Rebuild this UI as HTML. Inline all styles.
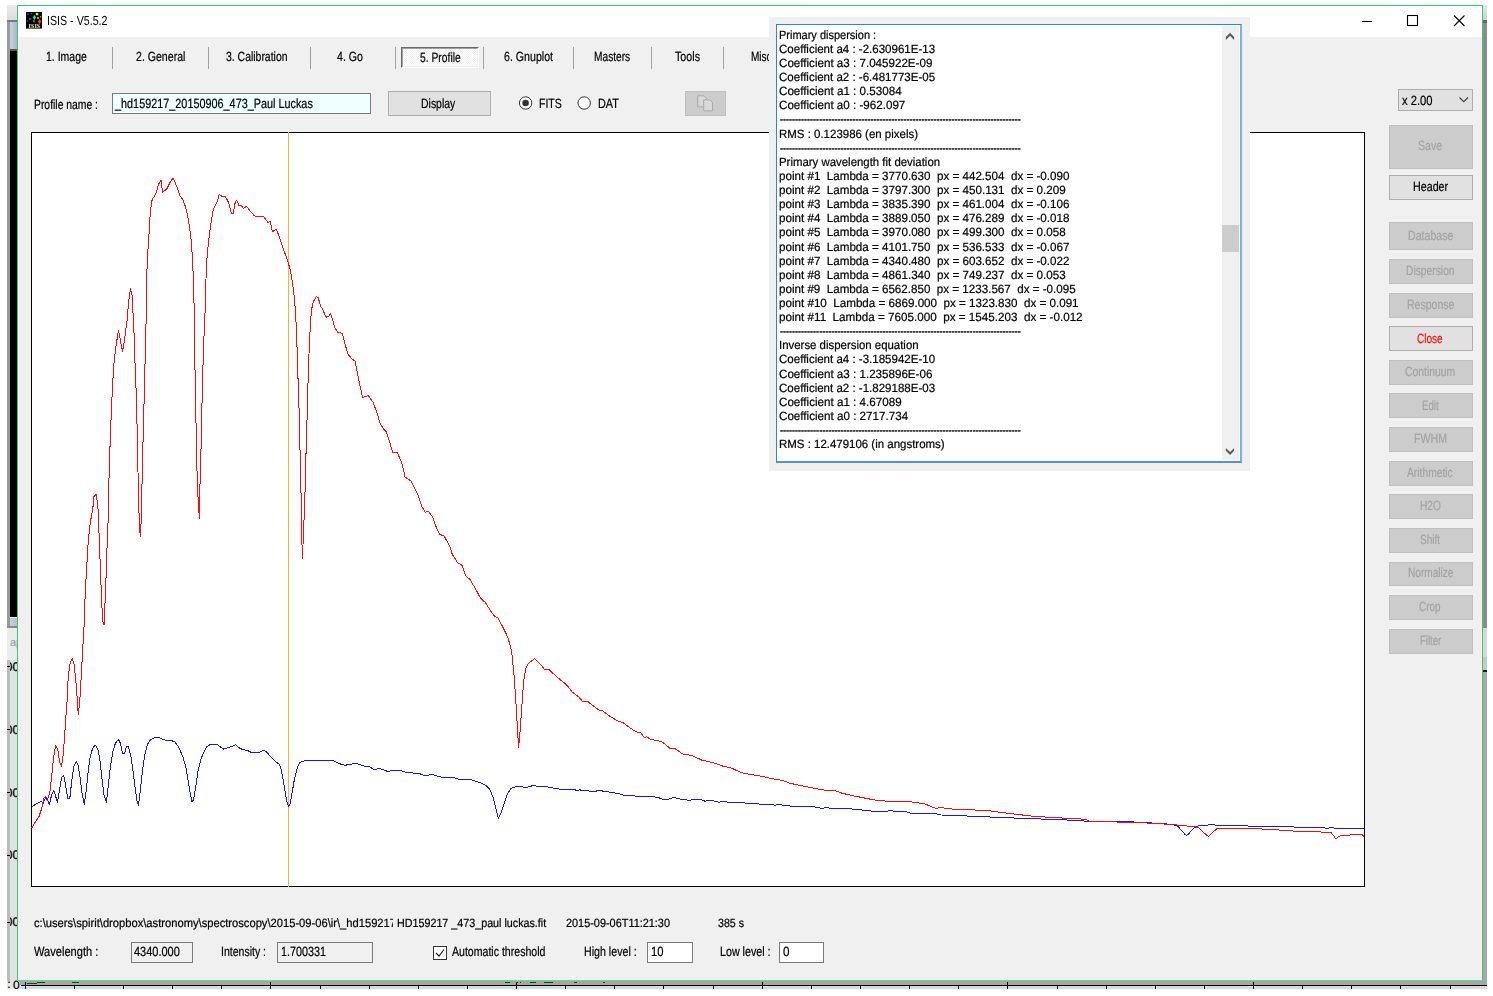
<!DOCTYPE html>
<html><head><meta charset="utf-8"><title>ISIS - V5.5.2</title>
<style>
html,body{margin:0;padding:0;background:#fff;}
body{width:1493px;height:996px;position:relative;overflow:hidden;font-family:"Liberation Sans",sans-serif;}
.a{position:absolute;}
.t{position:absolute;white-space:pre;transform-origin:0 0;text-rendering:geometricPrecision;-webkit-text-stroke:0.22px;}
.sep{position:absolute;width:1px;top:47px;height:22px;background:#a0a0a0;}
.btn{position:absolute;box-sizing:border-box;border:1px solid #adadad;background:#e1e1e1;}
.dis{position:absolute;box-sizing:border-box;border:1px solid #bfbfbf;background:#cccccc;}
.inp{position:absolute;box-sizing:border-box;border:1px solid #7a7a7a;background:#fff;}
</style></head><body>

<div class="a" style="left:7px;top:5px;width:10px;height:15px;background:linear-gradient(#ececec,#dcdcdc);"></div>
<div class="a" style="left:7px;top:20px;width:10px;height:2px;background:#7a7a7a;"></div>
<div class="a" style="left:7px;top:22px;width:3px;height:604px;background:#9a9a9a;"></div>
<div class="a" style="left:10px;top:22px;width:7px;height:28px;background:linear-gradient(90deg,#c4d2e2,#aab6c8);"></div>
<div class="a" style="left:10px;top:49px;width:7px;height:2px;background:#555;"></div>
<div class="a" style="left:10px;top:51px;width:7px;height:566px;background:#000;"></div>
<div class="a" style="left:10px;top:617px;width:7px;height:1px;background:#f4f4f4;"></div>
<div class="a" style="left:10px;top:618px;width:7px;height:8px;background:linear-gradient(90deg,#c4d0e0,#b4c0d2);"></div>
<div class="a" style="left:7px;top:626px;width:10px;height:2px;background:#8a8a8a;"></div>
<div class="a" style="left:7px;top:628px;width:10px;height:32px;background:#ececec;"></div>
<div class="a" style="left:7px;top:660px;width:3px;height:329px;background:#bcbcbc;"></div>
<div class="a" style="left:10px;top:660px;width:7px;height:321px;background:#e2e2e2;"></div>
<div class="a" style="left:7px;top:981px;width:14px;height:8px;background:#e6e6e6;"></div>
<div class="a" style="left:20px;top:981px;width:1467px;height:4px;background:#aaa6a6;"></div>
<div class="a" style="left:20px;top:986px;width:1467px;height:3px;background:#dadada;"></div>
<div class="a" style="left:21px;top:985px;width:1466px;height:1px;background:#000;"></div>
<div class="a" style="left:1483px;top:5px;width:4px;height:15px;background:linear-gradient(#e4e4e4,#d0d0d0);"></div>
<div class="a" style="left:1483px;top:20px;width:4px;height:3px;background:#666;"></div>
<div class="a" style="left:1483px;top:23px;width:4px;height:605px;background:#8c8c8c;"></div>
<div class="a" style="left:1483px;top:628px;width:4px;height:29px;background:#d8d8d8;"></div>
<div class="a" style="left:1483px;top:657px;width:4px;height:13px;background:#c8c8c8;"></div>
<div class="a" style="left:1483px;top:670px;width:4px;height:2px;background:#111;"></div>
<div class="a" style="left:1483px;top:672px;width:4px;height:313px;background:#a8a8a8;"></div>
<div class="a" style="left:25px;top:982px;width:1.4px;height:7px;background:#000;"></div>
<div class="a" style="left:74px;top:985px;width:1.2px;height:3.5px;background:#111;"></div>
<div class="a" style="left:123px;top:985px;width:1.2px;height:3.5px;background:#111;"></div>
<div class="a" style="left:172px;top:985px;width:1.2px;height:3.5px;background:#111;"></div>
<div class="a" style="left:221px;top:985px;width:1.2px;height:3.5px;background:#111;"></div>
<div class="a" style="left:270px;top:982px;width:1.4px;height:7px;background:#000;"></div>
<div class="a" style="left:320px;top:985px;width:1.2px;height:3.5px;background:#111;"></div>
<div class="a" style="left:369px;top:985px;width:1.2px;height:3.5px;background:#111;"></div>
<div class="a" style="left:418px;top:985px;width:1.2px;height:3.5px;background:#111;"></div>
<div class="a" style="left:467px;top:985px;width:1.2px;height:3.5px;background:#111;"></div>
<div class="a" style="left:516px;top:982px;width:1.4px;height:7px;background:#000;"></div>
<div class="a" style="left:565px;top:985px;width:1.2px;height:3.5px;background:#111;"></div>
<div class="a" style="left:614px;top:985px;width:1.2px;height:3.5px;background:#111;"></div>
<div class="a" style="left:663px;top:985px;width:1.2px;height:3.5px;background:#111;"></div>
<div class="a" style="left:713px;top:985px;width:1.2px;height:3.5px;background:#111;"></div>
<div class="a" style="left:762px;top:982px;width:1.4px;height:7px;background:#000;"></div>
<div class="a" style="left:811px;top:985px;width:1.2px;height:3.5px;background:#111;"></div>
<div class="a" style="left:860px;top:985px;width:1.2px;height:3.5px;background:#111;"></div>
<div class="a" style="left:909px;top:985px;width:1.2px;height:3.5px;background:#111;"></div>
<div class="a" style="left:958px;top:985px;width:1.2px;height:3.5px;background:#111;"></div>
<div class="a" style="left:1007px;top:982px;width:1.4px;height:7px;background:#000;"></div>
<div class="a" style="left:1057px;top:985px;width:1.2px;height:3.5px;background:#111;"></div>
<div class="a" style="left:1106px;top:985px;width:1.2px;height:3.5px;background:#111;"></div>
<div class="a" style="left:1155px;top:985px;width:1.2px;height:3.5px;background:#111;"></div>
<div class="a" style="left:1204px;top:985px;width:1.2px;height:3.5px;background:#111;"></div>
<div class="a" style="left:1253px;top:982px;width:1.4px;height:7px;background:#000;"></div>
<div class="a" style="left:1302px;top:985px;width:1.2px;height:3.5px;background:#111;"></div>
<div class="a" style="left:1351px;top:985px;width:1.2px;height:3.5px;background:#111;"></div>
<div class="a" style="left:1400px;top:985px;width:1.2px;height:3.5px;background:#111;"></div>
<div class="a" style="left:1450px;top:985px;width:1.2px;height:3.5px;background:#111;"></div>
<div class="a" style="left:27px;top:983px;width:10px;height:1px;background:#333;"></div>
<div class="a" style="left:37px;top:981.5px;width:8px;height:1.5px;background:#0c4a2c;"></div>
<div class="a" style="left:71.5px;top:981.5px;width:7.5px;height:1.5px;background:#0c4a2c;"></div>
<div class="a" style="left:505px;top:981.5px;width:5px;height:1.5px;background:#0c4a2c;"></div>
<div class="a" style="left:516px;top:981.5px;width:1.5px;height:1.5px;background:#0c4a2c;"></div>
<div class="a" style="left:519.5px;top:981.5px;width:1.5px;height:1.5px;background:#0c4a2c;"></div>
<div class="a" style="left:530px;top:981.5px;width:6px;height:1.5px;background:#0c4a2c;"></div>
<div class="a" style="left:543.5px;top:981.5px;width:9.5px;height:1.5px;background:#0c4a2c;"></div>
<div class="a" style="left:573.5px;top:981.5px;width:3.5px;height:1.5px;background:#0c4a2c;"></div>
<div class="a" style="left:603px;top:981.5px;width:2px;height:1.5px;background:#0c4a2c;"></div>
<div class="a" style="left:7.2px;top:666px;width:2.4px;height:1.2px;background:#000;"></div>
<div class="a" style="left:9.6px;top:659.5px;width:7.4px;height:14px;overflow:hidden;"><span class="t" style="left:-4.1px;top:0;font-size:12.5px;line-height:14px;color:#000;">00</span></div>
<div class="a" style="left:7.2px;top:729px;width:2.4px;height:1.2px;background:#000;"></div>
<div class="a" style="left:9.6px;top:722.5px;width:7.4px;height:14px;overflow:hidden;"><span class="t" style="left:-4.1px;top:0;font-size:12.5px;line-height:14px;color:#000;">00</span></div>
<div class="a" style="left:7.2px;top:792px;width:2.4px;height:1.2px;background:#000;"></div>
<div class="a" style="left:9.6px;top:785.5px;width:7.4px;height:14px;overflow:hidden;"><span class="t" style="left:-4.1px;top:0;font-size:12.5px;line-height:14px;color:#000;">00</span></div>
<div class="a" style="left:7.2px;top:854.5px;width:2.4px;height:1.2px;background:#000;"></div>
<div class="a" style="left:9.6px;top:848px;width:7.4px;height:14px;overflow:hidden;"><span class="t" style="left:-4.1px;top:0;font-size:12.5px;line-height:14px;color:#000;">00</span></div>
<div class="a" style="left:7.2px;top:921.8px;width:2.4px;height:1.2px;background:#000;"></div>
<div class="a" style="left:9.6px;top:915.3px;width:7.4px;height:14px;overflow:hidden;"><span class="t" style="left:-4.1px;top:0;font-size:12.5px;line-height:14px;color:#000;">00</span></div>
<div class="a" style="left:10px;top:636px;width:7px;height:16px;overflow:hidden;"><span class="t" style="left:0px;top:0;font-size:11px;line-height:14px;color:#a0a0a8;">ap</span></div>
<span class="t" style="left:7.3px;top:978.3px;font-size:12px;line-height:12px;color:#000;">:</span>
<span class="t" style="left:13px;top:978.6px;font-size:12px;line-height:12px;color:#000;">0</span>
<div class="a" style="left:0px;top:989px;width:1493px;height:7px;background:#fff;"></div>
<div class="a" id="win" style="left:17px;top:5px;width:1466px;height:976px;box-sizing:border-box;border:1px solid #2ccb74;background:#f0f0f0;"></div>
<div class="a" style="left:18px;top:6px;width:1464px;height:31px;background:#fff;"></div>
<div class="a" style="left:18px;top:37px;width:1px;height:943px;background:#fbeff1;"></div><div class="a" style="left:1481px;top:37px;width:1px;height:943px;background:#fbeff1;"></div>
<div class="a" style="left:17px;top:980px;width:1466px;height:1px;background:#6fd4a0;"></div><div class="a" style="left:18px;top:981px;width:1465px;height:1px;background:#7cba98;"></div>
<svg class="a" style="left:26px;top:12px;will-change:transform" width="16" height="17" viewBox="0 0 16 17">
<rect width="16" height="16.6" fill="#000"/>
<rect x="1" y="1.7" width="2.2" height="1.5" fill="#0a35e0"/>
<rect x="4.3" y="1.1" width="2" height="1.1" fill="#1468d0"/>
<rect x="9.8" y="0.9" width="2.5" height="2.4" fill="#b8f940"/>
<polygon points="8.4,3.1 10.1,5.4 8.4,7.9 6.8,5.4" fill="#22f566"/>
<rect x="13.8" y="3.9" width="1.5" height="1.5" fill="#a8a822"/>
<rect x="11" y="5" width="2.1" height="2" fill="#dc8a34"/>
<rect x="3" y="6" width="2.2" height="2" fill="#1458bc"/>
<rect x="1.1" y="8.2" width="1.1" height="2" fill="#8a12aa"/>
<rect x="7" y="8.2" width="1.7" height="2" fill="#10a8b8"/>
<polygon points="13.6,7 15.3,9.6 13.6,12.2 11.8,9.6" fill="#fb4030"/>
<text x="2.6" y="16" font-family="Liberation Serif,serif" font-weight="bold" font-size="5.8" fill="#f4f4a0" textLength="11.6" lengthAdjust="spacingAndGlyphs">ISIS</text>
</svg>

<svg class="a" style="left:1350px;top:6px" width="130" height="31" viewBox="0 0 130 31">
<path d="M12 15.5H22" stroke="#000" stroke-width="1.1" fill="none"/>
<rect x="57.5" y="9.5" width="10" height="10" stroke="#000" stroke-width="1.1" fill="none"/>
<path d="M104 9.5L114.5 20M114.5 9.5L104 20" stroke="#000" stroke-width="1.1" fill="none"/>
</svg>
<div class="sep" style="left:112px"></div>
<div class="sep" style="left:208px"></div>
<div class="sep" style="left:310px"></div>
<div class="sep" style="left:395px"></div>
<div class="sep" style="left:483px"></div>
<div class="sep" style="left:573px"></div>
<div class="sep" style="left:651px"></div>
<div class="sep" style="left:723px"></div>
<div class="a" style="left:401px;top:47px;width:78px;height:21px;box-sizing:border-box;border:1px solid #fff;border-top-color:#696969;border-left-color:#696969;background:#f7f7f7 conic-gradient(#fff 25%,#f0f0f0 0 50%,#fff 0 75%,#f0f0f0 0) 0 0/2px 2px;"><div style="width:100%;height:100%;box-sizing:border-box;border:1px solid #e3e3e3;border-top-color:#a0a0a0;border-left-color:#a0a0a0;border-right-color:#f0f0f0;border-bottom-color:#f0f0f0"></div></div>
<div class="inp" style="left:112px;top:93px;width:259px;height:21px;background:#f0ffff;"></div>
<div class="btn" style="left:388px;top:91px;width:103px;height:25px;"></div>
<svg class="a" style="left:517px;top:94px" width="90" height="18" viewBox="0 0 90 18">
<circle cx="8.6" cy="9" r="6.2" fill="#fff" stroke="#333" stroke-width="1"/><circle cx="8.6" cy="9" r="3.3" fill="#333"/>
<circle cx="67.2" cy="9" r="6.2" fill="#fff" stroke="#333" stroke-width="1"/>
</svg>
<div class="dis" style="left:685px;top:91px;width:41px;height:25px;"></div>
<svg class="a" style="left:685px;top:91px" width="41" height="25" viewBox="0 0 41 25">
<path d="M12.7 4.8h6.3l2.5 2.6v8.4h-8.8z" fill="#d9d9d9" stroke="#a9a9a9" stroke-width="1" stroke-linejoin="round"/>
<path d="M18.7 8.9h6.3l2.5 2.6v8.4h-8.8z" fill="#d9d9d9" stroke="#a9a9a9" stroke-width="1" stroke-linejoin="round"/>
</svg>
<div class="a" style="left:31px;top:132px;width:1334px;height:755px;box-sizing:border-box;border:1px solid #000;background:#fff;"></div>
<svg class="a" style="left:0;top:0" width="1493" height="996" viewBox="0 0 1493 996">
<rect x="288" y="132" width="1" height="755" fill="#fbae32"/>
<polyline shape-rendering="crispEdges" fill="none" stroke="#1414f4" stroke-width="1" stroke-linejoin="round" points="31.6,807.5 35.0,804.5 39.0,802.5 41.7,801.5 43.1,803.5 45.7,797.5 47.7,800.5 49.5,804.5 51.7,794.4 53.7,790.4 55.7,796.5 57.5,802.5 59.7,788.4 61.7,777.4 63.8,775.4 65.8,786.4 67.8,798.5 69.8,798.5 71.8,780.4 73.8,766.3 76.2,761.3 78.2,765.3 80.2,778.4 82.2,794.4 84.3,804.5 86.3,790.4 88.3,770.3 90.3,756.3 92.7,748.2 95.3,745.2 97.9,749.2 99.9,760.3 101.9,778.4 103.9,794.4 106.4,802.5 108.4,784.4 110.4,766.3 112.8,752.2 115.4,743.2 118.4,739.2 120.4,743.2 122.4,753.2 124.4,753.9 126.5,746.6 128.5,746.6 130.9,756.3 132.9,770.3 134.9,786.4 136.9,800.5 138.5,805.5 140.5,788.4 142.5,770.3 144.9,754.3 147.5,744.2 150.6,739.8 154.6,737.8 158.6,737.2 162.6,739.2 166.6,740.6 171.7,740.6 175.1,742.2 178.7,747.2 182.7,756.3 185.7,766.3 188.1,780.4 190.1,792.4 191.8,801.5 193.4,800.5 195.2,790.4 197.8,772.3 200.8,759.3 203.8,752.2 206.8,746.6 210.8,744.2 216.9,744.2 220.9,747.2 223.9,749.2 227.9,747.6 231.9,746.6 235.4,744.6 239.0,747.8 243.0,749.8 247.0,750.2 251.0,752.2 259.1,752.6 263.1,750.6 266.1,751.2 270.1,756.3 274.1,760.3 279.2,764.3 281.2,769.3 283.2,780.4 285.2,792.4 287.2,803.5 288.8,806.5 290.2,803.5 292.2,792.4 294.2,780.4 296.8,769.3 299.3,763.3 301.7,761.3 309.3,760.3 319.4,760.3 320.0,760.3 334.1,760.9 340.1,763.9 345.1,765.3 350.1,764.3 355.8,763.3 363.2,765.9 369.2,766.7 373.9,769.3 380.3,768.7 387.3,771.3 395.4,770.3 401.4,770.7 407.4,772.7 418.5,773.3 424.5,775.4 432.5,774.7 442.6,777.4 448.6,778.0 453.6,777.4 458.6,779.4 471.7,779.8 475.7,781.4 480.8,782.8 485.8,785.4 489.8,789.4 492.8,796.5 495.8,808.5 498.4,818.2 500.8,813.5 503.9,804.5 507.3,794.4 510.9,788.4 515.9,786.8 520.9,786.4 525.0,787.4 529.0,786.8 533.4,785.4 537.0,786.4 545.1,786.4 553.1,788.0 561.1,789.4 575.2,789.8 577.2,791.0 579.2,789.8 585.2,790.8 595.3,791.4 598.3,790.4 605.3,791.4 613.4,792.8 620.0,794.0 625.7,795.7 628.7,795.1 631.7,795.7 638.7,796.3 650.8,796.3 658.8,797.7 663.9,799.7 667.9,799.3 673.9,797.3 677.9,798.7 689.0,800.3 695.0,799.3 700.0,799.3 705.1,801.2 711.1,800.1 719.1,802.4 723.1,801.2 729.2,802.4 741.2,802.4 747.2,803.4 757.3,803.8 761.3,804.4 773.4,804.8 775.0,805.4 778.0,804.4 784.1,805.4 794.1,806.4 814.2,806.8 822.2,808.4 826.3,807.4 830.3,808.4 850.4,808.8 860.4,809.8 874.5,811.4 886.5,811.4 890.6,810.4 894.6,811.4 906.6,811.8 912.7,813.8 920.7,813.4 936.8,814.0 940.8,815.0 964.9,815.4 968.9,816.5 989.0,816.9 993.0,817.5 1013.1,817.9 1017.2,818.5 1039.3,818.5 1043.3,819.5 1065.4,819.7 1071.0,820.8 1075.0,820.0 1082.1,820.8 1088.1,821.4 1114.2,821.6 1124.3,821.6 1142.4,822.4 1158.4,823.4 1172.5,824.4 1177.5,826.0 1181.5,830.4 1184.6,834.0 1186.6,835.4 1188.6,834.0 1191.6,830.4 1195.6,826.8 1199.6,825.6 1206.7,825.4 1210.7,824.4 1214.7,825.0 1218.7,825.4 1246.8,825.6 1249.9,826.8 1252.9,826.0 1293.1,826.4 1295.1,827.4 1323.2,827.6 1326.2,828.4 1331.2,827.6 1336.3,828.4 1363.8,828.4"/>
<polyline shape-rendering="crispEdges" fill="none" stroke="#ff0808" stroke-width="1" stroke-linejoin="round" points="31.6,828.2 35.0,822.6 39.0,816.5 41.7,808.5 43.7,798.5 45.7,796.5 47.7,798.9 49.7,793.4 51.7,776.4 53.7,756.3 55.7,745.8 57.7,749.2 59.7,762.3 61.5,766.3 63.2,754.3 64.6,736.2 66.2,712.1 67.2,700.0 68.2,676.8 70.2,662.7 72.2,658.3 74.2,664.7 76.2,684.8 77.8,705.9 78.2,715.1 79.8,700.9 81.2,676.8 82.6,650.7 83.9,630.6 84.7,606.5 85.7,584.3 86.9,564.3 88.3,540.1 90.3,522.1 92.7,510.0 93.9,496.8 96.3,494.4 97.9,506.9 98.7,519.9 98.9,530.1 99.9,556.2 100.9,582.3 101.9,606.5 102.9,621.5 104.1,625.1 104.7,610.5 105.8,584.3 106.8,554.2 107.8,526.1 108.8,510.0 108.8,484.8 109.8,452.6 110.8,424.5 111.8,401.4 112.8,381.3 113.8,365.2 115.4,350.1 118.4,330.4 120.4,340.1 122.4,351.7 124.4,341.1 126.5,324.0 127.1,320.0 128.5,302.8 130.5,288.7 132.5,296.8 133.5,327.9 133.9,330.0 134.9,360.2 136.5,400.4 137.5,446.6 138.5,496.8 139.5,528.1 140.3,536.1 141.1,522.1 141.9,488.8 142.9,446.6 144.1,400.4 145.1,360.2 146.1,320.0 146.5,282.7 147.5,256.6 149.0,234.5 150.2,214.4 151.6,201.3 153.0,198.3 155.6,194.3 158.6,184.3 161.0,180.2 162.6,192.3 166.6,189.3 170.7,181.2 173.3,178.2 176.7,186.3 179.7,195.3 182.7,199.3 185.7,207.4 187.7,216.4 189.7,228.5 191.4,242.5 192.4,258.6 193.4,278.7 194.2,310.8 194.8,358.2 195.8,412.4 196.8,464.7 198.0,496.8 199.4,519.0 199.4,501.8 200.4,472.7 201.4,434.5 202.4,384.3 203.8,340.1 204.8,320.0 205.2,306.8 206.0,278.7 206.8,260.6 208.4,242.5 210.8,224.4 213.3,209.4 216.9,202.3 219.3,194.3 221.9,196.3 225.3,196.3 228.9,203.3 231.5,214.0 233.3,213.4 235.4,201.3 237.0,200.7 239.0,205.4 241.0,205.4 243.4,208.4 246.6,206.4 250.0,210.8 254.6,216.0 263.1,216.0 268.1,222.8 270.1,221.4 272.5,231.9 276.1,228.9 279.2,236.5 283.6,249.6 287.6,260.6 290.2,269.7 292.2,280.7 294.2,296.8 295.6,312.9 296.8,340.1 297.8,372.2 299.3,416.5 300.3,463.7 301.3,504.9 301.9,542.2 302.5,558.8 303.3,536.1 304.7,504.9 305.7,463.7 306.9,424.5 307.9,386.3 308.9,356.2 309.9,334.1 311.3,310.8 313.3,301.8 316.3,296.4 318.3,297.8 320.4,305.8 322.4,308.8 323.0,310.1 326.0,317.2 329.0,316.2 330.4,313.2 332.5,319.2 334.5,327.2 338.1,332.6 342.1,333.2 344.1,340.3 347.7,353.9 351.1,358.0 355.2,361.4 357.2,372.4 360.2,386.5 362.6,397.5 365.2,396.5 368.2,395.5 373.2,402.6 377.3,413.6 379.9,422.7 383.3,428.7 386.3,431.7 389.3,440.8 392.7,452.4 397.4,452.8 401.4,461.8 404.4,473.9 405.1,477.0 408.1,479.0 411.1,481.1 417.2,493.1 422.2,507.2 425.2,512.2 428.2,511.2 432.2,516.2 436.3,527.3 439.3,533.9 444.3,536.3 449.9,546.4 452.3,554.4 457.4,562.4 462.0,565.4 465.4,575.5 470.0,579.5 476.5,590.6 480.5,598.2 485.5,602.6 490.5,610.7 494.5,616.3 498.2,618.3 502.6,626.7 507.6,636.8 510.6,646.8 511.7,652.1 513.8,672.2 515.8,700.3 517.2,724.4 518.6,747.5 520.2,730.4 521.8,706.3 523.8,680.2 525.8,668.1 528.2,663.7 534.7,658.5 540.3,664.1 544.3,669.1 549.3,669.7 556.4,676.6 566.4,684.6 572.4,692.2 578.5,696.7 582.5,701.3 587.5,701.3 592.5,705.3 598.6,709.9 602.6,710.7 608.6,715.4 618.6,721.4 622.7,722.4 630.7,728.4 636.7,732.0 640.8,732.8 644.4,737.5 646.8,736.9 650.8,739.5 657.8,740.5 662.9,742.5 670.9,749.1 673.9,747.9 682.9,754.1 692.0,755.5 702.0,760.2 713.1,762.6 723.1,766.2 731.2,768.0 741.2,772.6 751.3,774.6 761.3,776.2 771.4,778.6 782.1,780.3 790.1,783.3 806.2,786.7 822.2,789.9 835.3,790.7 842.3,793.3 854.4,796.0 874.5,800.0 884.5,801.0 892.6,802.0 898.6,801.4 908.6,801.4 916.7,802.8 923.7,803.4 930.8,806.4 935.8,808.4 940.8,807.4 946.8,808.4 954.9,809.4 970.9,809.8 989.0,810.8 1001.1,812.4 1017.2,814.4 1031.2,816.0 1043.3,816.9 1051.3,817.5 1063.4,818.1 1074.0,818.4 1086.1,819.4 1090.1,821.4 1116.2,822.0 1146.4,823.0 1170.5,824.4 1186.6,826.0 1194.6,826.4 1199.6,828.4 1203.6,832.4 1208.3,836.5 1212.7,832.4 1216.7,828.8 1224.7,828.0 1258.9,828.8 1279.0,830.0 1299.1,831.4 1321.2,832.0 1331.2,832.8 1334.3,836.5 1335.7,838.9 1338.3,836.9 1341.3,835.4 1349.3,835.4 1351.3,834.4 1362.4,834.8 1363.8,836.5"/>
</svg>
<div class="btn" style="left:1398px;top:89px;width:75px;height:22px;"></div>
<svg class="a" style="left:1457.4px;top:94.3px" width="14" height="12" viewBox="0 0 14 12"><path d="M2.5 3.5L6.75 7.75L11 3.5" stroke="#404040" stroke-width="1.1" fill="none"/></svg>
<div class="dis" style="left:1389px;top:125px;width:84px;height:44px;"></div>
<div class="btn" style="left:1389px;top:175px;width:84px;height:25px;"></div>
<div class="dis" style="left:1389px;top:222px;width:84px;height:28px;"></div>
<div class="dis" style="left:1389px;top:259px;width:84px;height:25px;"></div>
<div class="dis" style="left:1389px;top:293px;width:84px;height:25px;"></div>
<div class="btn" style="left:1389px;top:326px;width:84px;height:25px;"></div>
<div class="dis" style="left:1389px;top:360px;width:84px;height:25px;"></div>
<div class="dis" style="left:1389px;top:393px;width:84px;height:25px;"></div>
<div class="dis" style="left:1389px;top:427px;width:84px;height:25px;"></div>
<div class="dis" style="left:1389px;top:461px;width:84px;height:25px;"></div>
<div class="dis" style="left:1389px;top:494px;width:84px;height:25px;"></div>
<div class="dis" style="left:1389px;top:528px;width:84px;height:25px;"></div>
<div class="dis" style="left:1389px;top:562px;width:84px;height:24px;"></div>
<div class="dis" style="left:1389px;top:595px;width:84px;height:25px;"></div>
<div class="dis" style="left:1389px;top:629px;width:84px;height:25px;"></div>
<div class="inp" style="left:131px;top:942px;width:62px;height:21px;background:#f0f0f0;"></div>
<div class="inp" style="left:277px;top:942px;width:96px;height:21px;background:#f0f0f0;"></div>
<div class="inp" style="left:647px;top:942px;width:46px;height:21px;"></div>
<div class="inp" style="left:779px;top:942px;width:45px;height:21px;"></div>
<svg class="a" style="left:433px;top:946px" width="14" height="14" viewBox="0 0 14 14"><rect x="0.5" y="0.5" width="13" height="13" fill="#fff" stroke="#333"/><path d="M3 7L6 10L11 3.5" stroke="#222" stroke-width="1.2" fill="none"/></svg>
<div class="a" style="left:769px;top:17px;width:481px;height:454px;background:#f0f0f0;"></div>
<div class="a" style="left:776px;top:24px;width:466px;height:439px;box-sizing:border-box;border-style:solid;border-width:1px 2px 2px 1px;border-color:#2f84d8 #78b2e4 #4a95dc #2f84d8;background:#fff;"></div>
<div class="a" style="left:1222px;top:26px;width:17px;height:434px;background:#f0f0f0;"></div>
<div class="a" style="left:1222px;top:225px;width:17px;height:27px;background:#cdcdcd;"></div>
<svg class="a" style="left:1222px;top:26px" width="17" height="434" viewBox="0 0 17 434"><polygon points="3.8,13.9 8.1,9.8 12.1,13.9 12.1,11.1 8.1,6.8 3.8,11.1" fill="#5c5c5c"/><polygon points="3.8,422 8.1,426 12.1,422 12.1,424.8 8.1,429 3.8,424.8" fill="#5c5c5c"/></svg>
<span class="t" style="left:47.0px;top:14.3px;font-size:13.2px;line-height:13.2px;color:#000;transform:scale(0.8090,1.0);-webkit-text-stroke:0;">ISIS - V5.5.2</span>
<span class="t" style="left:45.5px;top:50.3px;font-size:13.3px;line-height:13.3px;color:#000;transform:scale(0.7884,1.0);">1. Image</span>
<span class="t" style="left:136.0px;top:50.3px;font-size:13.3px;line-height:13.3px;color:#000;transform:scale(0.7956,1.0);">2. General</span>
<span class="t" style="left:226.0px;top:50.3px;font-size:13.3px;line-height:13.3px;color:#000;transform:scale(0.7848,1.0);">3. Calibration</span>
<span class="t" style="left:337.3px;top:50.3px;font-size:13.3px;line-height:13.3px;color:#000;transform:scale(0.7992,1.0);">4. Go</span>
<span class="t" style="left:420.2px;top:51.1px;font-size:13.3px;line-height:13.3px;color:#000;transform:scale(0.7755,1.0);">5. Profile</span>
<span class="t" style="left:503.8px;top:50.3px;font-size:13.3px;line-height:13.3px;color:#000;transform:scale(0.7986,1.0);">6. Gnuplot</span>
<span class="t" style="left:594.3px;top:50.3px;font-size:13.3px;line-height:13.3px;color:#000;transform:scale(0.7654,1.0);">Masters</span>
<span class="t" style="left:675.2px;top:50.3px;font-size:13.3px;line-height:13.3px;color:#000;transform:scale(0.8052,1.0);">Tools</span>
<div class="a" style="left:750.0px;top:48.3px;width:19.0px;height:19px;overflow:hidden;"><span class="t" style="left:1.0px;top:2px;font-size:13.3px;line-height:13.3px;color:#000;transform:scale(0.7538,1.0);">Misc</span></div>
<span class="t" style="left:34.3px;top:97.9px;font-size:13.3px;line-height:13.3px;color:#000;transform:scale(0.7800,1.0);">Profile name :</span>
<span class="t" style="left:115.0px;top:97.0px;font-size:13.3px;line-height:13.3px;color:#000;transform:scale(0.8156,1.0);">_hd159217_20150906_473_Paul Luckas</span>
<span class="t" style="left:420.5px;top:97.0px;font-size:13.3px;line-height:13.3px;color:#000;transform:scale(0.7865,1.0);">Display</span>
<span class="t" style="left:538.6px;top:96.9px;font-size:13.3px;line-height:13.3px;color:#000;transform:scale(0.7913,1.0);">FITS</span>
<span class="t" style="left:597.6px;top:96.9px;font-size:13.3px;line-height:13.3px;color:#000;transform:scale(0.8161,1.0);">DAT</span>
<span class="t" style="left:1401.5px;top:93.8px;font-size:13.3px;line-height:13.3px;color:#000;transform:scale(0.8417,1.0);">x 2.00</span>
<div class="a" style="left:34.0px;top:914.7px;width:359.0px;height:18px;overflow:hidden;"><span class="t" style="left:0.3px;top:2px;font-size:12px;line-height:12px;color:#000;transform:scale(0.9309,1.0);">c:\users\spirit\dropbox\astronomy\spectroscopy\2015-09-06\ir\_hd159217</span></div>
<span class="t" style="left:396.5px;top:916.7px;font-size:12px;line-height:12px;color:#000;transform:scale(0.8946,1.0);">HD159217 _473_paul luckas.fit</span>
<span class="t" style="left:565.9px;top:916.7px;font-size:12px;line-height:12px;color:#000;transform:scale(0.9079,1.0);">2015-09-06T11:21:30</span>
<span class="t" style="left:718.0px;top:916.7px;font-size:12px;line-height:12px;color:#000;transform:scale(0.8856,1.0);">385 s</span>
<span class="t" style="left:34.3px;top:944.6px;font-size:13.3px;line-height:13.3px;color:#000;transform:scale(0.8337,1.0);">Wavelength :</span>
<span class="t" style="left:133.6px;top:944.6px;font-size:13.3px;line-height:13.3px;color:#000;transform:scale(0.8257,1.0);">4340.000</span>
<span class="t" style="left:221.4px;top:944.6px;font-size:13.3px;line-height:13.3px;color:#000;transform:scale(0.7906,1.0);">Intensity :</span>
<span class="t" style="left:281.0px;top:944.6px;font-size:13.3px;line-height:13.3px;color:#000;transform:scale(0.8113,1.0);">1.700331</span>
<span class="t" style="left:452.3px;top:945.3px;font-size:13.3px;line-height:13.3px;color:#000;transform:scale(0.7947,1.0);">Automatic threshold</span>
<span class="t" style="left:584.3px;top:944.6px;font-size:13.3px;line-height:13.3px;color:#000;transform:scale(0.8011,1.0);">High level :</span>
<span class="t" style="left:650.5px;top:944.6px;font-size:13.3px;line-height:13.3px;color:#000;transform:scale(0.8448,1.0);">10</span>
<span class="t" style="left:719.6px;top:944.6px;font-size:13.3px;line-height:13.3px;color:#000;transform:scale(0.8054,1.0);">Low level :</span>
<span class="t" style="left:782.5px;top:944.6px;font-size:13.3px;line-height:13.3px;color:#000;transform:scale(0.8776,1.0);">0</span>
<span class="t" style="left:779.4px;top:28.8px;font-size:12px;line-height:12px;color:#000;transform:scale(0.9158,1.0);">Primary dispersion :</span>
<span class="t" style="left:779.4px;top:43.0px;font-size:12px;line-height:12px;color:#000;transform:scale(0.9602,1.0);">Coefficient a4 : -2.630961E-13</span>
<span class="t" style="left:779.4px;top:57.1px;font-size:12px;line-height:12px;color:#000;transform:scale(0.9674,1.0);">Coefficient a3 : 7.045922E-09</span>
<span class="t" style="left:779.4px;top:71.2px;font-size:12px;line-height:12px;color:#000;transform:scale(0.9602,1.0);">Coefficient a2 : -6.481773E-05</span>
<span class="t" style="left:779.4px;top:85.3px;font-size:12px;line-height:12px;color:#000;transform:scale(0.9688,1.0);">Coefficient a1 : 0.53084</span>
<span class="t" style="left:779.4px;top:99.4px;font-size:12px;line-height:12px;color:#000;transform:scale(0.9675,1.0);">Coefficient a0 : -962.097</span>
<span class="t" style="left:779.7px;top:113.3px;font-size:12px;line-height:12px;color:#000;transform:scale(0.7532,1.0);-webkit-text-stroke:0.35px;">--------------------------------------------------------------------------------</span>
<span class="t" style="left:779.4px;top:127.6px;font-size:12px;line-height:12px;color:#000;transform:scale(0.9559,1.0);">RMS : 0.123986 (en pixels)</span>
<span class="t" style="left:779.7px;top:141.5px;font-size:12px;line-height:12px;color:#000;transform:scale(0.7532,1.0);-webkit-text-stroke:0.35px;">--------------------------------------------------------------------------------</span>
<span class="t" style="left:779.4px;top:155.8px;font-size:12px;line-height:12px;color:#000;transform:scale(0.9509,1.0);">Primary wavelength fit deviation</span>
<span class="t" style="left:779.4px;top:169.9px;font-size:12px;line-height:12px;color:#000;transform:scale(0.9683,1.0);">point #1  Lambda = 3770.630  px = 442.504  dx = -0.090</span>
<span class="t" style="left:779.4px;top:184.1px;font-size:12px;line-height:12px;color:#000;transform:scale(0.9686,1.0);">point #2  Lambda = 3797.300  px = 450.131  dx = 0.209</span>
<span class="t" style="left:779.4px;top:198.2px;font-size:12px;line-height:12px;color:#000;transform:scale(0.9683,1.0);">point #3  Lambda = 3835.390  px = 461.004  dx = -0.106</span>
<span class="t" style="left:779.4px;top:212.3px;font-size:12px;line-height:12px;color:#000;transform:scale(0.9683,1.0);">point #4  Lambda = 3889.050  px = 476.289  dx = -0.018</span>
<span class="t" style="left:779.4px;top:226.4px;font-size:12px;line-height:12px;color:#000;transform:scale(0.9686,1.0);">point #5  Lambda = 3970.080  px = 499.300  dx = 0.058</span>
<span class="t" style="left:779.4px;top:240.5px;font-size:12px;line-height:12px;color:#000;transform:scale(0.9683,1.0);">point #6  Lambda = 4101.750  px = 536.533  dx = -0.067</span>
<span class="t" style="left:779.4px;top:254.6px;font-size:12px;line-height:12px;color:#000;transform:scale(0.9683,1.0);">point #7  Lambda = 4340.480  px = 603.652  dx = -0.022</span>
<span class="t" style="left:779.4px;top:268.7px;font-size:12px;line-height:12px;color:#000;transform:scale(0.9686,1.0);">point #8  Lambda = 4861.340  px = 749.237  dx = 0.053</span>
<span class="t" style="left:779.4px;top:282.8px;font-size:12px;line-height:12px;color:#000;transform:scale(0.9675,1.0);">point #9  Lambda = 6562.850  px = 1233.567  dx = -0.095</span>
<span class="t" style="left:779.4px;top:296.9px;font-size:12px;line-height:12px;color:#000;transform:scale(0.9687,1.0);">point #10  Lambda = 6869.000  px = 1323.830  dx = 0.091</span>
<span class="t" style="left:779.4px;top:311.0px;font-size:12px;line-height:12px;color:#000;transform:scale(0.9720,1.0);">point #11  Lambda = 7605.000  px = 1545.203  dx = -0.012</span>
<span class="t" style="left:779.7px;top:325.0px;font-size:12px;line-height:12px;color:#000;transform:scale(0.7532,1.0);-webkit-text-stroke:0.35px;">--------------------------------------------------------------------------------</span>
<span class="t" style="left:779.4px;top:339.3px;font-size:12px;line-height:12px;color:#000;transform:scale(0.9512,1.0);">Inverse dispersion equation</span>
<span class="t" style="left:779.4px;top:353.4px;font-size:12px;line-height:12px;color:#000;transform:scale(0.9602,1.0);">Coefficient a4 : -3.185942E-10</span>
<span class="t" style="left:779.4px;top:367.5px;font-size:12px;line-height:12px;color:#000;transform:scale(0.9674,1.0);">Coefficient a3 : 1.235896E-06</span>
<span class="t" style="left:779.4px;top:381.6px;font-size:12px;line-height:12px;color:#000;transform:scale(0.9602,1.0);">Coefficient a2 : -1.829188E-03</span>
<span class="t" style="left:779.4px;top:395.7px;font-size:12px;line-height:12px;color:#000;transform:scale(0.9688,1.0);">Coefficient a1 : 4.67089</span>
<span class="t" style="left:779.4px;top:409.8px;font-size:12px;line-height:12px;color:#000;transform:scale(0.9691,1.0);">Coefficient a0 : 2717.734</span>
<span class="t" style="left:779.7px;top:423.7px;font-size:12px;line-height:12px;color:#000;transform:scale(0.7532,1.0);-webkit-text-stroke:0.35px;">--------------------------------------------------------------------------------</span>
<span class="t" style="left:779.4px;top:438.0px;font-size:12px;line-height:12px;color:#000;transform:scale(0.9549,1.0);">RMS : 12.479106 (in angstroms)</span>
<span class="t" style="left:1418.0px;top:139.4px;font-size:13.3px;line-height:13.3px;color:#a3a3a3;transform:scale(0.7984,1.0);">Save</span>
<span class="t" style="left:1412.8px;top:180.4px;font-size:13.3px;line-height:13.3px;color:#000;transform:scale(0.8046,1.0);">Header</span>
<span class="t" style="left:1407.7px;top:229.4px;font-size:13.3px;line-height:13.3px;color:#a3a3a3;transform:scale(0.7976,1.0);">Database</span>
<span class="t" style="left:1405.7px;top:264.4px;font-size:13.3px;line-height:13.3px;color:#a3a3a3;transform:scale(0.7735,1.0);">Dispersion</span>
<span class="t" style="left:1406.7px;top:297.5px;font-size:13.3px;line-height:13.3px;color:#a3a3a3;transform:scale(0.7916,1.0);">Response</span>
<span class="t" style="left:1417.3px;top:331.5px;font-size:13.3px;line-height:13.3px;color:#f01010;transform:scale(0.7559,1.0);">Close</span>
<span class="t" style="left:1405.0px;top:365.3px;font-size:13.3px;line-height:13.3px;color:#a3a3a3;transform:scale(0.7806,1.0);">Continuum</span>
<span class="t" style="left:1422.2px;top:398.6px;font-size:13.3px;line-height:13.3px;color:#a3a3a3;transform:scale(0.7242,1.0);">Edit</span>
<span class="t" style="left:1414.2px;top:432.1px;font-size:13.3px;line-height:13.3px;color:#a3a3a3;transform:scale(0.7979,1.0);">FWHM</span>
<span class="t" style="left:1407.4px;top:465.8px;font-size:13.3px;line-height:13.3px;color:#a3a3a3;transform:scale(0.7731,1.0);">Arithmetic</span>
<span class="t" style="left:1420.0px;top:499.2px;font-size:13.3px;line-height:13.3px;color:#a3a3a3;transform:scale(0.7643,1.0);">H2O</span>
<span class="t" style="left:1420.1px;top:533.3px;font-size:13.3px;line-height:13.3px;color:#a3a3a3;transform:scale(0.7516,1.0);">Shift</span>
<span class="t" style="left:1407.7px;top:566.4px;font-size:13.3px;line-height:13.3px;color:#a3a3a3;transform:scale(0.7584,1.0);">Normalize</span>
<span class="t" style="left:1419.4px;top:600.1px;font-size:13.3px;line-height:13.3px;color:#a3a3a3;transform:scale(0.7458,1.0);">Crop</span>
<span class="t" style="left:1420.4px;top:633.9px;font-size:13.3px;line-height:13.3px;color:#a3a3a3;transform:scale(0.7171,1.0);">Filter</span>
</body></html>
